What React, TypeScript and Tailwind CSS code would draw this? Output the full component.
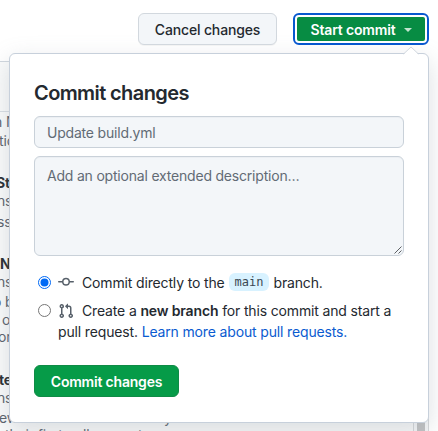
import React from "react";

type Snippet = { text: string; top: string; indent: string; bold?: boolean };

const snippets: Snippet[] = [
  { text: "n N", top: "mt-[1px]", indent: "-indent-[6px]" },
  { text: "tion", top: "mt-[1px]", indent: "-indent-[1px]" },
  { text: "Start", top: "mt-[24px]", indent: "-indent-[4px]", bold: true },
  { text: "ns", top: "", indent: "-indent-[3px]" },
  { text: "ss", top: "mt-[3px]", indent: "-indent-[3px]" },
  { text: "Node", top: "mt-[24px]", indent: "-indent-[0px]", bold: true },
  { text: "ns", top: "", indent: "-indent-[3px]" },
  { text: "o build", top: "mt-[2px]", indent: "-indent-[7px]" },
  { text: "of", top: "", indent: "indent-[2px]" },
  { text: "or", top: "-mt-[1px]", indent: "-indent-[2px]" },
  { text: "ter", top: "mt-[25px]", indent: "-indent-[1px]", bold: true },
  { text: "ns", top: "", indent: "-indent-[3px]" },
  { text: "ew contributors when they", top: "mt-[2px]", indent: "-indent-[1px]" },
  { text: "their first pull request", top: "-mt-[1px]", indent: "indent-[5px]" },
];

function Sidebar() {
  return (
    <div className="h-[431px] w-[429px] pt-[61px]">
      <div className="h-[370px] overflow-hidden border-t border-[#d0d7de] bg-[#fafbfb]">
        <div className="h-[50px] border-b border-[#d8dee4]" />
        <div className="flex">
          <div className="w-[413px] overflow-hidden text-[14px] leading-[18px] whitespace-nowrap text-[#57606a]">
            {snippets.map((s, i) => (
              <p key={i} className={`${s.top} ${s.indent} ${s.bold ? "font-bold text-[#24292f]" : ""}`}>
                {s.text}
              </p>
            ))}
          </div>
          <div className="flex h-[319px] w-[16px] justify-center border-x border-[#d5d7d9] bg-[#f6f7f8]">
            <div className="w-[8px] bg-[#c0c1c2]" />
          </div>
        </div>
      </div>
    </div>
  );
}

function Radio({ checked }: { checked?: boolean }) {
  return (
    <svg className="shrink-0" width="13" height="13" viewBox="0 0 13 13" fill="none">
      <circle cx="6.5" cy="6.5" r="6" fill="#fff" stroke={checked ? "#0069f5" : "#767676"} />
      {checked && <circle cx="6.5" cy="6.5" r="4" fill="#0069f5" />}
    </svg>
  );
}

export default function App() {
  return (
    <div className="relative h-[431px] w-[438px] overflow-hidden bg-white font-[Inter,sans-serif] text-[14px] tracking-[-0.15px] text-[#24292f]">
      <Sidebar />

      <div className="absolute top-[53px] left-[9px] h-[370px] w-[420px] rounded-md border border-[#c7d0db] bg-white px-6 pt-[27px] shadow-[0_8px_24px_rgba(140,149,159,0.3)]">
        <svg className="absolute -top-[8px] right-[9px]" width="16" height="9" viewBox="0 0 16 9">
          <path d="M0.5 8.5L8 1L15.5 8.5V9H0.5Z" fill="#fff" />
          <path d="M0.5 8L8 1L15.5 8" fill="none" stroke="#d0d7de" />
        </svg>
        <h2 className="text-[20px] leading-6 font-semibold tracking-[-0.6px]">Commit changes</h2>
        <div className="mt-[11px] flex h-8 items-center rounded-md border border-[#c9d1d9] bg-[#f3f6f9] px-3 tracking-[-0.2px] text-[#626b75] shadow-[inset_0_1px_0_rgba(208,215,222,0.2)]">
          Update build.yml
        </div>
        <div className="relative mt-2 h-[100px] rounded-md border border-[#c9d1d9] bg-[#f3f6f9] px-3 pt-[9px] leading-5 tracking-[-0.2px] text-[#626b75] shadow-[inset_0_1px_0_rgba(208,215,222,0.2)]">
          Add an optional extended description…
          <svg className="absolute right-[1px] bottom-[1px]" width="8" height="8" viewBox="0 0 8 8" stroke="#5c6064" fill="none">
            <path d="M0.5 7.5L7.5 0.5M4.5 7.5L7.5 4.5" />
          </svg>
        </div>

        <div className="mt-[15px] flex h-[22px] items-center pl-[4px]">
          <Radio checked />
          <svg className="ml-[7px] shrink-0" width="16" height="16" viewBox="0 0 16 16" fill="#57606a">
            <path fillRule="evenodd" d="M10.5 7.75a2.5 2.5 0 11-5 0 2.5 2.5 0 015 0zm1.43.75a4.002 4.002 0 01-7.86 0H.75a.75.75 0 110-1.5h3.32a4.001 4.001 0 017.86 0h3.32a.75.75 0 110 1.5h-3.32z" />
          </svg>
          <span className="ml-2">Commit directly to the</span>
          <code className="mx-1 rounded-md bg-[#d8f2ff] px-[6px] text-[12px] leading-[18px] tracking-normal text-[#3b4853] [font-family:'DejaVu_Sans_Mono',monospace]">main</code>
          <span>branch.</span>
        </div>
        <div className="mt-[7px] flex pl-[4px] leading-[21px]">
          <span className="pt-[4px]"><Radio /></span>
          <div className="ml-[7px] whitespace-nowrap">
            <div className="flex items-center">
              <svg className="mr-2 shrink-0" width="16" height="16" viewBox="0 0 16 16" fill="#57606a">
                <path fillRule="evenodd" d="M7.177 3.073L9.573.677A.25.25 0 0110 .854v4.792a.25.25 0 01-.427.177L7.177 3.427a.25.25 0 010-.354zM3.75 2.5a.75.75 0 100 1.5.75.75 0 000-1.5zm-2.25.75a2.25 2.25 0 113 2.122v5.256a2.251 2.251 0 11-1.5 0V5.372A2.25 2.25 0 011.5 3.25zM11 2.5h-1V4h1a1 1 0 011 1v5.628a2.251 2.251 0 101.5 0V5A2.5 2.5 0 0011 2.5zm1 10.25a.75.75 0 111.5 0 .75.75 0 01-1.5 0zM3.75 12a.75.75 0 100 1.5.75.75 0 000-1.5z" />
              </svg>
              <span>Create a <b className="font-semibold">new branch</b> for this commit and start a</span>
            </div>
            <div>pull request. <a className="text-[#0a5bd0]">Learn more about pull requests.</a></div>
          </div>
        </div>
        <button className="mt-[23px] h-8 w-[145px] rounded-md border border-[#0f8b46] bg-[#069b48] text-[14px] font-semibold tracking-[-0.2px] text-white">
          Commit changes
        </button>
      </div>

      <div className="absolute top-[13px] right-[9px] flex gap-4">
        <button className="h-8 w-[139px] rounded-md border border-[#d2d8de] bg-[#f3f6f9] text-[14px] font-medium shadow-[0_1px_0_rgba(27,31,36,0.04)]">
          Cancel changes
        </button>
        <button className="flex h-8 w-[136px] items-center justify-center rounded-md border-2 border-[#0758cf] bg-white p-[2px] text-[14px] font-semibold text-white">
          <span className="flex h-full w-full items-center justify-center rounded-[2px] bg-[#078c43]">
            Start commit
            <span className="mt-[1px] ml-2 border-x-4 border-t-4 border-x-transparent border-t-[#c2e4cf]" />
          </span>
        </button>
      </div>
    </div>
  );
}
